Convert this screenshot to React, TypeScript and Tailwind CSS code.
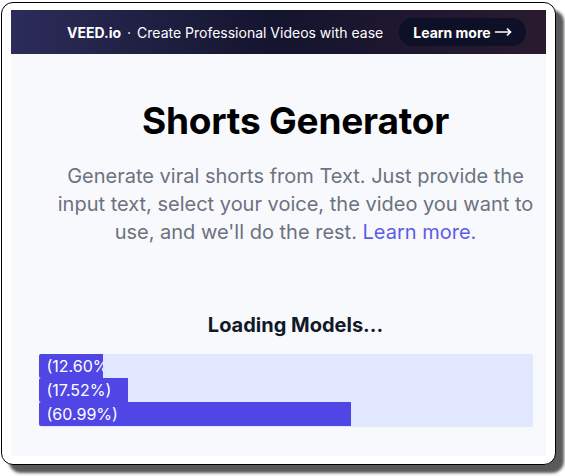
import { MoveRight } from "lucide-react";

const progress = [12.6, 17.52, 60.99];

export default function App() {
  return (
    <div className="w-[565px] h-[476px] bg-white relative" style={{ fontFamily: "Inter, 'Noto Sans', sans-serif" }}>
      <div className="absolute left-[1px] top-[2px] w-[555px] h-[463px] rounded-[12px] border border-black bg-white px-[9px] pt-[7px] pb-[8px] shadow-[8px_8px_3px_rgba(60,60,60,0.85)]">
        <div className="h-full bg-[#f8f9fc] flex flex-col">
          {/* promo banner */}
          <div className="h-[44px] shrink-0 flex items-center pl-[56px] bg-gradient-to-r from-[#2c2c5a] via-[#14142e] to-[#2a1a30] text-white">
            <span className="text-[14px] font-bold">VEED.io</span>
            <span className="text-[14px] mx-[6px]">·</span>
            <span className="text-[14px]">Create Professional Videos with ease</span>
            <span className="ml-[16px] flex items-center gap-[3px] rounded-full bg-[#0e1027] px-[14px] h-[28px] text-[14px] font-bold">
              Learn more
              <MoveRight className="w-[18px] h-[18px]" strokeWidth={2.2} />
            </span>
          </div>

          <div className="flex flex-col items-center pl-[40px] pr-[6px]">
            <h1 className="mt-[47px] text-[37px] leading-[40px] font-bold text-black tracking-[-0.2px]">Shorts Generator</h1>
            <p className="mt-[21px] text-[20px] leading-[28px] text-[#6b7280] text-center">
              Generate viral shorts from Text. Just provide the input text, select your voice, the video you want to use, and we'll do the rest.{" "}
              <span className="text-[#5d5ce6]">Learn more.</span>
            </p>

            <h2 className="mt-[65px] text-[20px] leading-[28px] font-bold text-[#111827]">Loading Models...</h2>

            <div className="mt-[15px] -ml-[20px] w-[494px] bg-[#e0e7ff] rounded-[2px] flex flex-col pb-[1px]">
              {progress.map((p) => (
                <div
                  key={p}
                  className="h-[24px] bg-[#4f46e5] text-white text-[16px] leading-[24px] px-[8px] whitespace-nowrap overflow-hidden rounded-l-[2px]"
                  style={{ width: `${p * 5.12}px` }}
                >
                  ({p.toFixed(2)}%)
                </div>
              ))}
            </div>
          </div>
        </div>
      </div>
    </div>
  );
}
